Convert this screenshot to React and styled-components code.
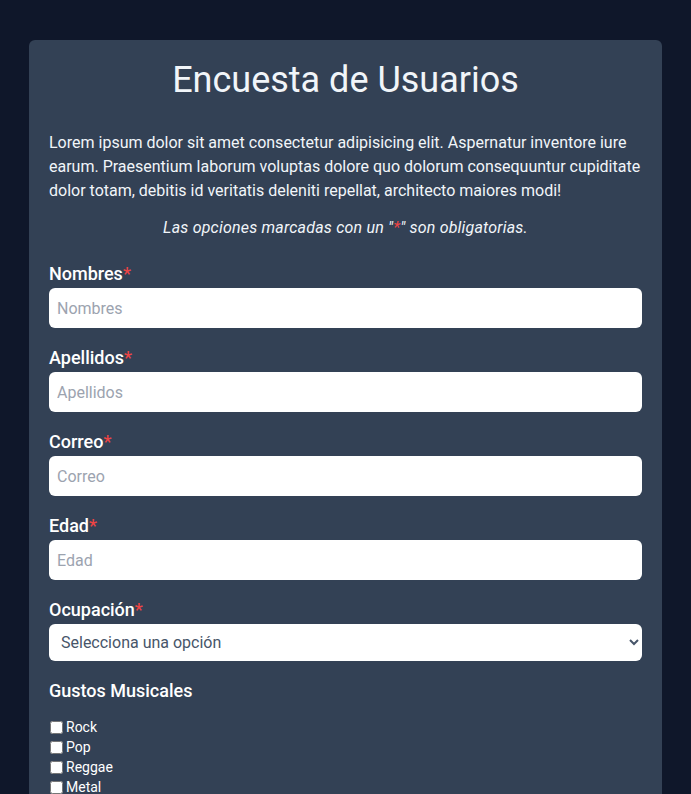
import React from "react";
import styled, { createGlobalStyle } from "styled-components";

const GlobalStyle = createGlobalStyle`
  html, body {
    margin: 0;
    padding: 0;
    background: #0f172a;
    font-family: Roboto, "Liberation Sans", sans-serif;
  }
  * { box-sizing: border-box; }
`;

const Page = styled.div`
  padding: 40px 29px;
  min-height: 794px;
`;

const Card = styled.form`
  background: #334155;
  border-radius: 6px;
  padding: 20px;
  color: #f1f5f9;
`;

const Title = styled.h1`
  margin: 0 0 31px;
  font-size: 36px;
  line-height: 40px;
  font-weight: 400;
  text-align: center;
  color: #f1f5f9;
`;

const Intro = styled.p`
  margin: 0 0 13px;
  font-size: 16px;
  line-height: 24px;
`;

const Note = styled.p`
  margin: 0 0 20px;
  font-size: 16px;
  line-height: 24px;
  font-style: italic;
  text-align: center;
  letter-spacing: 0.2px;
`;

const Req = styled.span`
  color: #ef4444;
`;

const Field = styled.div`
  display: flex;
  flex-direction: column;
  margin-bottom: 16px;
`;

const Label = styled.label`
  font-size: 18px;
  line-height: 28px;
  font-weight: 500;
  color: #ffffff;
`;

const Input = styled.input`
  height: 40px;
  border: none;
  border-radius: 6px;
  padding: 8px;
  font-family: inherit;
  font-size: 16px;
  color: #1e293b;
  background: #fff;
  outline: none;
  &::placeholder {
    color: #9ca3af;
  }
`;

const Select = styled.select`
  height: 37px;
  border: none;
  border-radius: 6px;
  padding: 0 8px;
  font-family: inherit;
  font-size: 16px;
  color: #475569;
  background: #fff;
  outline: none;
`;

const GroupTitle = styled.h2`
  margin: 0 0 12px;
  font-size: 18px;
  line-height: 28px;
  font-weight: 500;
  color: #ffffff;
`;

const Checks = styled.div`
  display: flex;
  flex-direction: column;
`;

const Check = styled.label`
  display: flex;
  align-items: center;
  font-size: 14px;
  line-height: 20px;
  color: #ffffff;
  input {
    margin: 0 3px 0 1px;
    width: 13px;
    height: 13px;
  }
`;

const FIELDS = [
  { name: "Nombres", type: "text" },
  { name: "Apellidos", type: "text" },
  { name: "Correo", type: "email" },
  { name: "Edad", type: "number" },
];

const GUSTOS = ["Rock", "Pop", "Reggae", "Metal", "Jazz"];

export default function App() {
  return (
    <>
      <GlobalStyle />
      <Page>
        <Card onSubmit={(e) => e.preventDefault()}>
          <Title>Encuesta de Usuarios</Title>
          <Intro>
            Lorem ipsum dolor sit amet consectetur adipisicing elit. Aspernatur
            inventore iure earum. Praesentium laborum voluptas dolore quo
            dolorum consequuntur cupiditate dolor totam, debitis id veritatis
            deleniti repellat, architecto maiores modi!
          </Intro>
          <Note>
            Las opciones marcadas con un "<Req>*</Req>" son obligatorias.
          </Note>
          {FIELDS.map((f) => (
            <Field key={f.name}>
              <Label>
                {f.name}
                <Req>*</Req>
              </Label>
              <Input type={f.type} placeholder={f.name} />
            </Field>
          ))}
          <Field>
            <Label>
              Ocupación<Req>*</Req>
            </Label>
            <Select defaultValue="">
              <option value="" disabled>
                Selecciona una opción
              </option>
              <option>Estudiante</option>
              <option>Empleado</option>
            </Select>
          </Field>
          <GroupTitle>Gustos Musicales</GroupTitle>
          <Checks>
            {GUSTOS.map((g) => (
              <Check key={g}>
                <input type="checkbox" />
                {g}
              </Check>
            ))}
          </Checks>
        </Card>
      </Page>
    </>
  );
}
